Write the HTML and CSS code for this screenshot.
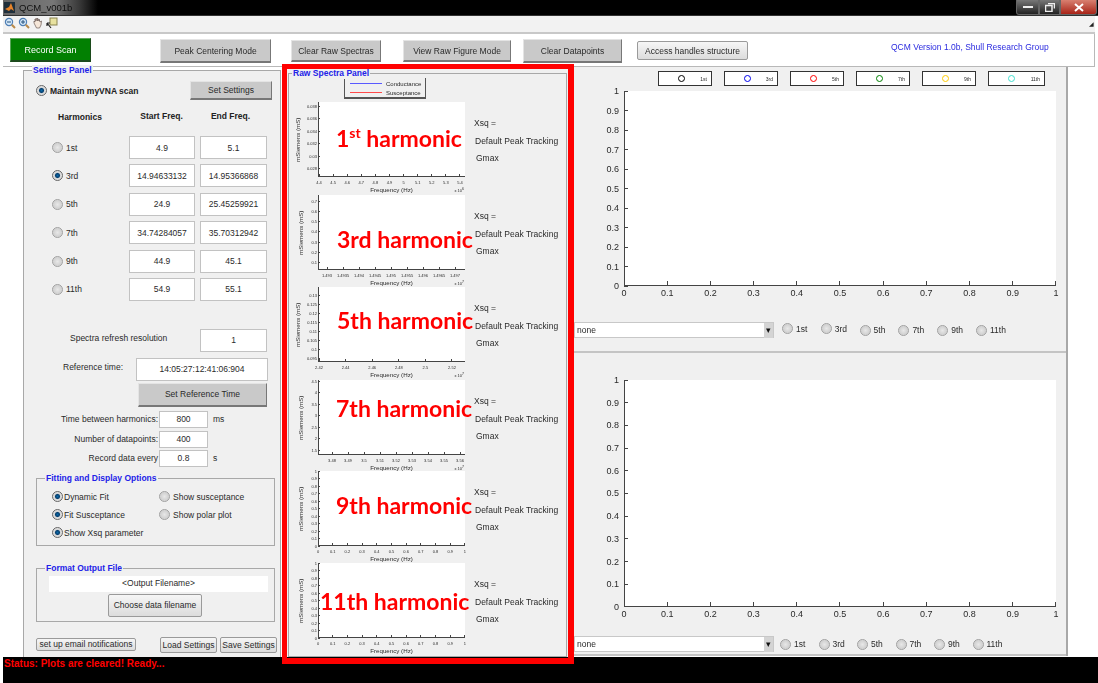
FILE: index.html
```html
<!DOCTYPE html>
<html lang="en">
<head>
    <meta charset="UTF-8">
    <title>QCM_v001b</title>
    <link rel="stylesheet" href="styles.css">
</head>
<body>
    <svg class="defs" width="0" height="0">
        <symbol id="lens" viewBox="0 0 12 12">
            <circle cx="5" cy="5" r="3.6" fill="#d5e8f8" stroke="#4f7fb5" stroke-width="1.2"/>
            <path d="M7.8 7.8 11 11" stroke="#b98a4a" stroke-width="2"/>
        </symbol>
    </svg>

    <div class="titlebar">
        <svg class="app-icon" width="11" height="11" viewBox="0 0 11 11">
            <rect width="11" height="11" fill="#20303c"/>
            <path d="M1 7 5 5 7 1 10 9 7 7 5 9Z" fill="#e8842a"/>
        </svg>
        <span class="app-title">QCM_v001b</span>
        <div class="win-buttons">
            <div class="win-btn win-min"><svg width="10" height="4"><rect y="1" width="10" height="2" fill="#eee"/></svg></div>
            <div class="win-btn win-max"><svg width="10" height="9"><path d="M3 .5h6.5v5M.5 2.5h6.500v6h-6.500z" fill="none" stroke="#eee" stroke-width="1.5"/></svg></div>
            <div class="win-btn win-close"><svg width="10" height="9"><path d="M1 1 9 8M9 1 1 8" stroke="#fff" stroke-width="2"/></svg></div>
        </div>
    </div>

    <div class="toolbar">
        <svg class="tool" width="12" height="12"><use href="#lens"/><rect x="3" y="4.5" width="4" height="1" fill="#26537f"/></svg>
        <svg class="tool" width="12" height="12"><use href="#lens"/><path d="M3 5h4M5 3v4" stroke="#26537f"/></svg>
        <svg class="tool" width="12" height="12" viewBox="0 0 12 12"><path d="M2 6V4l1 1V2l1 2V1l1.5 3V1L7 4V2l1 3 1.5-1L9 8l-1.5 3h-3L2 6Z" fill="#f5e6d8" stroke="#6b5a55" stroke-width=".7"/></svg>
        <svg class="tool" width="12" height="12" viewBox="0 0 12 12"><rect x="4" y="1" width="7" height="7" fill="#e8e2a0" stroke="#8a8450"/><path d="M1 6 5 11M1 6h3M1 6v3" stroke="#222" stroke-width="1.2"/></svg>
        <span class="toolbar-end">&#9698;</span>
    </div>

    <div class="topbar">
        <div class="btn btn-record">Record Scan</div>
        <div class="btn btn-peak">Peak Centering Mode</div>
        <div class="btn btn-clear">Clear Raw Spectras</div>
        <div class="btn btn-view">View Raw Figure Mode</div>
        <div class="btn btn-points">Clear Datapoints</div>
        <div class="btn-native btn-handles">Access handles structure</div>
        <div class="version">QCM Version 1.0b, Shull Research Group</div>
    </div>

    <div class="main">
        <div class="panel settings">
            <span class="panel-title">Settings Panel</span>
            <div class="maintain-row">
                <span class="radio checked"></span>
                <b class="maintain-label">Maintain myVNA scan</b>
                <div class="btn btn-settings">Set Settings</div>
            </div>
            <div class="harm-head">
                <b>Harmonics</b>
                <b>Start Freq.</b>
                <b>End Freq.</b>
            </div>
            <div class="harm-grid">
                <label class="harm-label"><span class="radio"></span>1st</label>
                <div class="field">4.9</div>
                <div class="field">5.1</div>
                <label class="harm-label"><span class="radio checked"></span>3rd</label>
                <div class="field">14.94633132</div>
                <div class="field">14.95366868</div>
                <label class="harm-label"><span class="radio"></span>5th</label>
                <div class="field">24.9</div>
                <div class="field">25.45259921</div>
                <label class="harm-label"><span class="radio"></span>7th</label>
                <div class="field">34.74284057</div>
                <div class="field">35.70312942</div>
                <label class="harm-label"><span class="radio"></span>9th</label>
                <div class="field">44.9</div>
                <div class="field">45.1</div>
                <label class="harm-label"><span class="radio"></span>11th</label>
                <div class="field">54.9</div>
                <div class="field">55.1</div>
            </div>
            <div class="refresh-row">
                <span class="refresh-label">Spectra refresh resolution</span>
                <div class="field refresh-field">1</div>
            </div>
            <div class="ref-row">
                <span class="ref-label">Reference time:</span>
                <div class="field ref-field">14:05:27:12:41:06:904</div>
            </div>
            <div class="btn btn-ref">Set Reference Time</div>
            <div class="time-row time-first">
                <span class="time-label">Time between harmonics:</span>
                <div class="field time-field">800</div>
                <span class="time-unit">ms</span>
            </div>
            <div class="time-row time-second">
                <span class="time-label">Number of datapoints:</span>
                <div class="field time-field">400</div>
            </div>
            <div class="time-row time-third">
                <span class="time-label">Record data every</span>
                <div class="field time-field">0.8</div>
                <span class="time-unit">s</span>
            </div>

            <div class="panel subpanel fit-panel">
                <span class="panel-title">Fitting and Display Options</span>
                <div class="fit-col">
                    <label class="opt"><span class="radio checked"></span>Dynamic Fit</label>
                    <label class="opt"><span class="radio checked"></span>Fit Susceptance</label>
                    <label class="opt"><span class="radio checked"></span>Show Xsq parameter</label>
                </div>
                <div class="fit-col fit-col-right">
                    <label class="opt"><span class="radio"></span>Show susceptance</label>
                    <label class="opt"><span class="radio"></span>Show polar plot</label>
                </div>
            </div>

            <div class="panel subpanel format-panel">
                <span class="panel-title">Format Output File</span>
                <div class="filename">&lt;Output Filename&gt;</div>
                <div class="btn-native btn-choose">Choose data filename</div>
            </div>

            <div class="bottom-buttons">
                <div class="btn-native btn-email">set up email notifications</div>
                <div class="btn-native btn-load">Load Settings</div>
                <div class="btn-native btn-save">Save Settings</div>
            </div>
        </div>

        <div class="raw-wrap">
            <div class="raw">
                <span class="panel-title">Raw Spectra Panel</span>
                <div class="raw-legend">
                    <div class="raw-legend-row"><span class="line line-blue"></span>Conductance</div>
                    <div class="raw-legend-row"><span class="line line-red"></span>Susceptance</div>
                </div>

                <div class="spectrum s1">
                    <div class="ylabel">mSiemens (mS)</div>
                    <div class="yticks"><span>0.038</span><span>0.036</span><span>0.034</span><span>0.032</span><span>0.03</span><span>0.028</span></div>
                    <div class="plot-col">
                        <div class="plot"></div>
                        <div class="xticks"><span>4.4</span><span>4.5</span><span>4.6</span><span>4.7</span><span>4.8</span><span>4.9</span><span>5</span><span>5.1</span><span>5.2</span><span>5.3</span><span>5.4</span></div>
                        <div class="xlabel">Frequency (Hz)<span class="exp">x 10<sup>6</sup></span></div>
                    </div>
                    <div class="info"><span>Xsq =</span><span class="info-mid">Default Peak Tracking</span><span class="info-low">Gmax</span></div>
                    <div class="harmonic">1<sup>st</sup> harmonic</div>
                </div>

                <div class="spectrum s2">
                    <div class="ylabel">mSiemens (mS)</div>
                    <div class="yticks"><span>0.7</span><span>0.6</span><span>0.5</span><span>0.4</span><span>0.3</span><span>0.2</span><span>0.1</span></div>
                    <div class="plot-col">
                        <div class="plot"></div>
                        <div class="xticks"><span>1.493</span><span>1.4935</span><span>1.494</span><span>1.4945</span><span>1.495</span><span>1.4955</span><span>1.496</span><span>1.4965</span><span>1.497</span></div>
                        <div class="xlabel">Frequency (Hz)<span class="exp">x 10<sup>7</sup></span></div>
                    </div>
                    <div class="info"><span>Xsq =</span><span class="info-mid">Default Peak Tracking</span><span class="info-low">Gmax</span></div>
                    <div class="harmonic">3rd harmonic</div>
                </div>

                <div class="spectrum s3">
                    <div class="ylabel">mSiemens (mS)</div>
                    <div class="yticks"><span>0.13</span><span>0.125</span><span>0.12</span><span>0.115</span><span>0.11</span><span>0.105</span><span>0.1</span><span>0.095</span></div>
                    <div class="plot-col">
                        <div class="plot"></div>
                        <div class="xticks"><span>2.42</span><span>2.44</span><span>2.46</span><span>2.48</span><span>2.5</span><span>2.52</span></div>
                        <div class="xlabel">Frequency (Hz)<span class="exp">x 10<sup>7</sup></span></div>
                    </div>
                    <div class="info"><span>Xsq =</span><span class="info-mid">Default Peak Tracking</span><span class="info-low">Gmax</span></div>
                    <div class="harmonic">5th harmonic</div>
                </div>

                <div class="spectrum s4">
                    <div class="ylabel">mSiemens (mS)</div>
                    <div class="yticks"><span>4.5</span><span>4</span><span>3.5</span><span>3</span><span>2.5</span><span>2</span><span>1.5</span></div>
                    <div class="plot-col">
                        <div class="plot"></div>
                        <div class="xticks"><span>3.48</span><span>3.49</span><span>3.5</span><span>3.51</span><span>3.52</span><span>3.53</span><span>3.54</span><span>3.55</span><span>3.56</span></div>
                        <div class="xlabel">Frequency (Hz)<span class="exp">x 10<sup>7</sup></span></div>
                    </div>
                    <div class="info"><span>Xsq =</span><span class="info-mid">Default Peak Tracking</span><span class="info-low">Gmax</span></div>
                    <div class="harmonic">7th harmonic</div>
                </div>

                <div class="spectrum s5">
                    <div class="ylabel">mSiemens (mS)</div>
                    <div class="yticks"><span>1</span><span>0.9</span><span>0.8</span><span>0.7</span><span>0.6</span><span>0.5</span><span>0.4</span><span>0.3</span><span>0.2</span><span>0.1</span><span>0</span></div>
                    <div class="plot-col">
                        <div class="plot"></div>
                        <div class="xticks"><span>0</span><span>0.1</span><span>0.2</span><span>0.3</span><span>0.4</span><span>0.5</span><span>0.6</span><span>0.7</span><span>0.8</span><span>0.9</span><span>1</span></div>
                        <div class="xlabel">Frequency (Hz)</div>
                    </div>
                    <div class="info"><span>Xsq =</span><span class="info-mid">Default Peak Tracking</span><span class="info-low">Gmax</span></div>
                    <div class="harmonic">9th harmonic</div>
                </div>

                <div class="spectrum s6">
                    <div class="ylabel">mSiemens (mS)</div>
                    <div class="yticks"><span>1</span><span>0.9</span><span>0.8</span><span>0.7</span><span>0.6</span><span>0.5</span><span>0.4</span><span>0.3</span><span>0.2</span><span>0.1</span><span>0</span></div>
                    <div class="plot-col">
                        <div class="plot"></div>
                        <div class="xticks"><span>0</span><span>0.1</span><span>0.2</span><span>0.3</span><span>0.4</span><span>0.5</span><span>0.6</span><span>0.7</span><span>0.8</span><span>0.9</span><span>1</span></div>
                        <div class="xlabel">Frequency (Hz)</div>
                    </div>
                    <div class="info"><span>Xsq =</span><span class="info-mid">Default Peak Tracking</span><span class="info-low">Gmax</span></div>
                    <div class="harmonic">11th harmonic</div>
                </div>
            </div>
        </div>

        <div class="plots">
            <div class="plot-panel plot-panel-top">
                <div class="key-row">
                    <div class="key"><i class="ring ring-black"></i>1st</div>
                    <div class="key"><i class="ring ring-blue"></i>3rd</div>
                    <div class="key"><i class="ring ring-red"></i>5th</div>
                    <div class="key"><i class="ring ring-green"></i>7th</div>
                    <div class="key"><i class="ring ring-yellow"></i>9th</div>
                    <div class="key key-wide"><i class="ring ring-cyan"></i>11th</div>
                </div>
                <div class="big-chart">
                    <div class="big-yticks"><span>1</span><span>0.9</span><span>0.8</span><span>0.7</span><span>0.6</span><span>0.5</span><span>0.4</span><span>0.3</span><span>0.2</span><span>0.1</span><span>0</span></div>
                    <div class="big-plot"></div>
                </div>
                <div class="big-xticks"><span>0</span><span>0.1</span><span>0.2</span><span>0.3</span><span>0.4</span><span>0.5</span><span>0.6</span><span>0.7</span><span>0.8</span><span>0.9</span><span>1</span></div>
                <div class="control-row">
                    <div class="select">none<span class="select-arrow">&#9662;</span></div>
                    <label class="plot-radio"><span class="radio"></span>1st</label>
                    <label class="plot-radio"><span class="radio"></span>3rd</label>
                    <label class="plot-radio"><span class="radio"></span>5th</label>
                    <label class="plot-radio"><span class="radio"></span>7th</label>
                    <label class="plot-radio"><span class="radio"></span>9th</label>
                    <label class="plot-radio"><span class="radio"></span>11th</label>
                </div>
            </div>
            <div class="plot-panel plot-panel-bottom">
                <div class="big-chart big-chart-tall">
                    <div class="big-yticks"><span>1</span><span>0.9</span><span>0.8</span><span>0.7</span><span>0.6</span><span>0.5</span><span>0.4</span><span>0.3</span><span>0.2</span><span>0.1</span><span>0</span></div>
                    <div class="big-plot"></div>
                </div>
                <div class="big-xticks"><span>0</span><span>0.1</span><span>0.2</span><span>0.3</span><span>0.4</span><span>0.5</span><span>0.6</span><span>0.7</span><span>0.8</span><span>0.9</span><span>1</span></div>
                <div class="control-row">
                    <div class="select">none<span class="select-arrow">&#9662;</span></div>
                    <label class="plot-radio"><span class="radio"></span>1st</label>
                    <label class="plot-radio"><span class="radio"></span>3rd</label>
                    <label class="plot-radio"><span class="radio"></span>5th</label>
                    <label class="plot-radio"><span class="radio"></span>7th</label>
                    <label class="plot-radio"><span class="radio"></span>9th</label>
                    <label class="plot-radio"><span class="radio"></span>11th</label>
                </div>
            </div>
        </div>
    </div>

    <div class="status">Status: Plots are cleared! Ready...</div>
    <div class="callout"></div>
</body>
</html>
```

FILE: styles.css
```css
* {
    box-sizing: border-box;
}
html, body {
    margin: 0;
    height: 683px;
    overflow: hidden;
}
body {
    position: relative;
    width: 1098px;
    padding-left: 3px;
    background: white;
    font-family: "Liberation Sans", Arial, sans-serif;
    font-size: 8.5px;
    color: #2a2a2a;
    filter: blur(.3px);
}
.defs {
    position: absolute;
}

/* window chrome */
.titlebar {
    display: flex;
    align-items: center;
    height: 16px;
    padding-left: 1px;
    background: linear-gradient(90deg, #666 0, #777 50px, #3a3a3a 76px, black 95px);
    border-bottom: 1px solid #333;
}
.app-title {
    margin-left: 4px;
    font-size: 9.5px;
    color: #111;
}
.win-buttons {
    display: flex;
    height: 15px;
    margin-left: auto;
    margin-right: 1px;
}
.win-btn {
    display: flex;
    align-items: center;
    justify-content: center;
    height: 15px;
    border: 1px solid #666;
    border-top: none;
    background: linear-gradient(#777, #222);
}
.win-min {
    width: 23px;
    border-radius: 0 0 0 3px;
}
.win-max {
    width: 21px;
}
.win-close {
    width: 37px;
    border-radius: 0 0 3px 0;
    background: linear-gradient(#d88070, #a82418);
}
.toolbar {
    display: flex;
    align-items: center;
    gap: 2px;
    width: 1092px;
    height: 18px;
    padding: 0 1px 2px 1px;
    background: #f2f2f2;
    border-bottom: 2px solid #c8c8c8;
}
.toolbar-end {
    margin-left: auto;
    font-size: 6px;
    color: #222;
}
.topbar {
    display: flex;
    align-items: flex-start;
    width: 1092px;
    height: 33px;
    background: white;
    border-bottom: 1px solid #b8b8b8;
    border-right: 1px solid #b8b8b8;
}

/* buttons */
.btn {
    display: flex;
    align-items: center;
    justify-content: center;
    background: #c9c9c9;
    border: 1px solid #e4e4e4;
    border-right-color: #777;
    border-bottom: 2px solid #777;
    white-space: nowrap;
}
.btn-native {
    display: flex;
    align-items: center;
    justify-content: center;
    background: linear-gradient(#f6f6f6, #dcdcdc);
    border: 1px solid #9a9a9a;
    border-radius: 2px;
    white-space: nowrap;
}
.btn-record {
    width: 81px;
    height: 24px;
    margin: 4px 0 0 7px;
    background: #028002;
    border-color: #5aa55a #1c4a1c #1c4a1c #5aa55a;
    color: white;
    font-size: 9px;
}
.btn-peak {
    width: 111px;
    height: 24px;
    margin: 5px 0 0 69px;
}
.btn-clear {
    width: 90px;
    height: 22px;
    margin: 6px 0 0 20px;
}
.btn-view {
    width: 108px;
    height: 22px;
    margin: 6px 0 0 22px;
}
.btn-points {
    width: 99px;
    height: 24px;
    margin: 5px 0 0 12px;
}
.btn-handles {
    width: 111px;
    height: 19px;
    margin: 7px 0 0 15px;
}
.version {
    margin: 8px 0 0 143px;
    color: #2a2adf;
    white-space: nowrap;
}

/* panels */
.main {
    display: flex;
    align-items: flex-start;
    height: 590px;
    padding-left: 20px;
}
.panel {
    position: relative;
    border: 1px solid #a8a8a8;
    background: #f0f0f0;
}
.panel-title {
    position: absolute;
    top: -6px;
    left: 8px;
    padding: 0 1px;
    background: #f0f0f0;
    color: #2222e8;
    font-weight: bold;
    line-height: 11px;
    white-space: nowrap;
}
.settings {
    width: 258px;
    height: 590px;
    margin-top: 3px;
}
.radio {
    display: inline-block;
    flex: none;
    width: 11px;
    height: 11px;
    border: 1px solid #a0a0a0;
    border-radius: 50%;
    background: radial-gradient(circle, #e8e8e8 0, #d2d2d2 60%, #eee 100%);
}
.radio.checked {
    background: radial-gradient(circle, #0a6aa8 0, #063f70 32%, #d8d8d8 48%, #eee 100%);
    border-color: #666;
}
.field {
    display: flex;
    align-items: center;
    justify-content: center;
    background: white;
    border: 1px solid #c2c2c2;
    white-space: nowrap;
}
.maintain-row {
    display: flex;
    align-items: center;
    height: 19px;
    margin: 10px 0 0 12px;
}
.maintain-label {
    flex: none;
    width: 140px;
    margin-left: 3px;
    color: #222;
    white-space: nowrap;
}
.btn-settings {
    flex: none;
    width: 82px;
    height: 19px;
}
.harm-head {
    display: grid;
    grid-template-columns: 71px 71px 67px;
    margin: 11px 0 12px 34px;
    height: 13px;
    line-height: 13px;
    color: #222;
}
.harm-head b:nth-child(n+2) {
    text-align: center;
    margin-top: -1px;
    padding-right: 6px;
}
.harm-grid {
    display: grid;
    grid-template-columns: 72px 66px 67px;
    grid-auto-rows: 23px;
    column-gap: 5px;
    row-gap: 5.4px;
    margin-left: 28px;
}
.harm-label {
    display: flex;
    align-items: center;
    gap: 3px;
}
.refresh-row {
    display: flex;
    height: 23px;
    margin: 28px 0 0 46px;
}
.refresh-label {
    margin-top: 4px;
    width: 130px;
}
.refresh-field {
    width: 67px;
}
.ref-row {
    display: flex;
    height: 23px;
    margin: 6px 0 0 39px;
}
.ref-label {
    width: 73px;
    margin-top: 4px;
}
.ref-field {
    width: 132px;
}
.btn-ref {
    width: 129px;
    height: 24px;
    margin: 2px 0 0 114px;
}
.time-row {
    display: flex;
    align-items: center;
    height: 17px;
}
.time-first {
    margin-top: 4px;
}
.time-second {
    margin-top: 3px;
}
.time-third {
    margin-top: 2px;
}
.time-label {
    width: 134px;
    text-align: right;
}
.time-field {
    width: 49px;
    height: 17px;
    margin-left: 1px;
}
.time-unit {
    margin-left: 5px;
}
.subpanel {
    width: 239px;
    margin-left: 12px;
}
.fit-panel {
    display: flex;
    height: 68px;
    margin-top: 11px;
    padding: 9px 0 0 15px;
}
.fit-col {
    width: 107px;
}
.opt {
    display: flex;
    align-items: center;
    gap: 1px;
    height: 18px;
    white-space: nowrap;
}
.fit-col-right .opt {
    gap: 3px;
}
.format-panel {
    height: 54px;
    margin-top: 22px;
}
.filename {
    width: 219px;
    height: 16px;
    margin: 7px 0 0 12px;
    background: white;
    text-align: center;
    line-height: 15px;
}
.btn-choose {
    width: 94px;
    height: 23px;
    margin: 2px 0 0 71px;
}
.bottom-buttons {
    display: flex;
    align-items: flex-start;
    margin: 15px 0 0 12px;
}
.btn-email {
    width: 100px;
    height: 13px;
    margin-top: 1px;
}
.btn-load {
    width: 57px;
    height: 16px;
    margin-left: 24px;
}
.btn-save {
    width: 57px;
    height: 16px;
    margin-left: 3px;
}

/* raw spectra */
.raw-wrap {
    flex: none;
    width: 281px;
    height: 589px;
    margin: 2px 0 0 6px;
    padding: 4px 1px 1px;
    background: #f0f0f0;
}
.raw {
    position: relative;
    height: 584px;
    border: 1px solid #a8a8a8;
}
.raw .panel-title {
    left: 3px;
}
.raw-legend {
    width: 82px;
    height: 21px;
    margin: 4px 0 0 55px;
    padding: 1px 0 0 5px;
    border: solid #555;
    border-width: 0 1px 2px 1px;
    font-size: 6px;
}
.raw-legend-row {
    display: flex;
    align-items: center;
    height: 9px;
}
.line {
    width: 32px;
    height: 1px;
    margin-right: 4px;
}
.line-blue {
    background: #5a5aff;
}
.line-red {
    background: #ff4a4a;
}
.spectrum {
    position: relative;
    display: flex;
    height: 92px;
}
.s1 {
    height: 93px;
    margin-top: 3px;
}
.s3 {
    height: 93px;
}
.s4 {
    height: 91px;
}
.ylabel {
    flex: none;
    display: flex;
    align-items: center;
    justify-content: center;
    width: 9px;
    height: 75px;
    margin-left: 4px;
    writing-mode: vertical-rl;
    transform: rotate(180deg);
    font-size: 6.2px;
    white-space: nowrap;
}
.s2 .ylabel, .s4 .ylabel, .s5 .ylabel, .s6 .ylabel {
    margin-left: 7px;
}
.yticks {
    position: relative;
    z-index: 1;
    flex: none;
    display: flex;
    flex-direction: column;
    justify-content: space-between;
    width: 16px;
    height: 75px;
    font-size: 4px;
}
.s2 .yticks, .s4 .yticks, .s5 .yticks, .s6 .yticks {
    width: 13px;
}
.yticks span {
    position: relative;
    display: flex;
    align-items: center;
    justify-content: flex-end;
    height: 0;
    padding-right: 1px;
}
.yticks span::after, .big-yticks span::after {
    content: "";
    position: absolute;
    left: 100%;
    width: 2px;
    height: 1px;
    background: #444;
}
.s1 .yticks {
    padding: 4px 0 8px;
}
.s2 .yticks {
    padding: 6px 0 7px;
}
.s3 .yticks {
    padding: 8px 0 4px;
}
.s4 .yticks {
    padding: 1px 0 5px;
}
.plot-col {
    flex: none;
    width: 147px;
}
.plot {
    height: 75px;
    background: white;
    border-left: 1px solid #444;
    border-bottom: 1px solid #444;
}
.xticks {
    display: flex;
    justify-content: space-between;
    height: 8px;
    font-size: 4px;
}
.xticks span {
    position: relative;
    display: flex;
    justify-content: center;
    width: 0;
    padding-top: 3px;
    white-space: nowrap;
}
.xticks span::before, .big-xticks span::before {
    content: "";
    position: absolute;
    bottom: 100%;
    width: 1px;
    height: 2px;
    background: #444;
}
.xticks span::before {
    top: -3px;
}
.s1 .xticks {
    padding: 0 5px 0 1px;
}
.s2 .xticks {
    padding: 0 10px 0 9px;
}
.s3 .xticks {
    padding: 0 13px 0 1px;
}
.s4 .xticks {
    padding: 0 5px 0 14px;
}
.xlabel {
    position: relative;
    text-align: center;
    font-size: 6.2px;
    line-height: 8px;
    padding-top: 1px;
}
.exp {
    position: absolute;
    right: 1px;
    top: 2px;
    font-size: 4px;
}
.exp sup {
    font-size: 3.5px;
    line-height: 0;
}
.info {
    display: flex;
    flex-direction: column;
    margin-left: 9px;
    padding-top: 13px;
    line-height: 17.5px;
    white-space: nowrap;
}
.info-mid {
    margin-left: 1px;
}
.info-low {
    margin-left: 2px;
}
.harmonic {
    position: absolute;
    top: 18px;
    left: 47px;
    color: #f00;
    font-family: Lato, sans-serif;
    font-size: 23px;
    font-weight: bold;
    line-height: 36px;
    white-space: nowrap;
}
.harmonic sup {
    font-size: 14px;
    line-height: 0;
}
.s2 .harmonic, .s3 .harmonic {
    left: 48px;
}
.s2 .harmonic {
    top: 26px;
}
.s3 .harmonic {
    top: 15px;
}
.s4 .harmonic {
    top: 10px;
}
.s5 .harmonic {
    top: 16px;
}
.s6 .harmonic {
    left: 31px;
    top: 20px;
}

/* right hand plots */
.plots {
    flex: none;
    width: 494px;
    margin-left: 6px;
    border-right: 2px solid #a8a8a8;
}
.plot-panel {
    background: #f0f0f0;
    border-bottom: 2px solid #c4c4c4;
}
.plot-panel-top {
    height: 286px;
}
.plot-panel-bottom {
    height: 303px;
    padding-top: 27px;
}
.key-row {
    display: flex;
    gap: 12px;
    height: 24px;
    padding: 4px 0 0 84px;
}
.key {
    display: flex;
    align-items: center;
    justify-content: space-between;
    width: 54px;
    height: 15px;
    padding: 0 4px 0 19px;
    background: white;
    border: 1px solid #333;
    font-size: 5px;
}
.key-wide {
    width: 57px;
}
.ring {
    width: 7px;
    height: 7px;
    border: 1.5px solid;
    border-radius: 50%;
}
.ring-black {
    border-color: black;
}
.ring-blue {
    border-color: #0000ee;
}
.ring-red {
    border-color: #f00;
}
.ring-green {
    border-color: #008000;
}
.ring-yellow {
    border-color: #ffcc00;
}
.ring-cyan {
    border-color: #40e0d0;
}
.big-chart {
    display: flex;
    height: 195px;
}
.big-chart-tall {
    height: 227px;
}
.big-yticks {
    position: relative;
    z-index: 1;
    display: flex;
    flex-direction: column;
    justify-content: space-between;
    width: 50px;
    font-size: 9px;
}
.big-yticks span {
    position: relative;
    display: flex;
    align-items: center;
    justify-content: flex-end;
    height: 0;
    padding-right: 5px;
}
.big-yticks span::after {
    width: 4px;
}
.big-plot {
    width: 432px;
    background: white;
    border-left: 1px solid #444;
    border-bottom: 1px solid #444;
}
.big-xticks {
    display: flex;
    justify-content: space-between;
    width: 432px;
    height: 14px;
    margin-left: 50px;
    font-size: 9px;
}
.big-xticks span {
    position: relative;
    display: flex;
    justify-content: center;
    width: 0;
    padding-top: 2px;
}
.big-xticks span::before {
    bottom: auto;
    top: -5px;
    height: 4px;
}
.control-row {
    display: flex;
    align-items: center;
    height: 16px;
    margin-top: 22px;
}
.plot-panel-bottom .control-row {
    margin-top: 15px;
}
.select {
    display: flex;
    align-items: center;
    justify-content: space-between;
    width: 200px;
    height: 16px;
    padding-left: 2px;
    background: white;
    border: 1px solid #c8c8c8;
}
.select-arrow {
    width: 9px;
    height: 15px;
    background: #d4d4d4;
    color: #111;
    text-align: center;
    line-height: 15px;
}
.plot-radio {
    display: flex;
    align-items: center;
    gap: 3px;
    width: 38.8px;
    padding-left: 8px;
    white-space: nowrap;
}
.plot-panel-top .plot-radio:nth-child(-n+3) {
    margin-top: -3px;
}
.plot-panel-bottom .plot-radio {
    width: 38.5px;
    padding-left: 6px;
}

/* status and annotation */
.status {
    position: absolute;
    left: 3px;
    right: 0;
    top: 657px;
    height: 26px;
    padding-left: 1px;
    background: black;
    color: #f00;
    font-size: 10px;
    font-weight: bold;
    line-height: 14px;
}
.callout {
    position: absolute;
    left: 282px;
    top: 64px;
    width: 292px;
    height: 600px;
    border: solid #f00;
    border-width: 5px 6px 6px 5px;
}
```
